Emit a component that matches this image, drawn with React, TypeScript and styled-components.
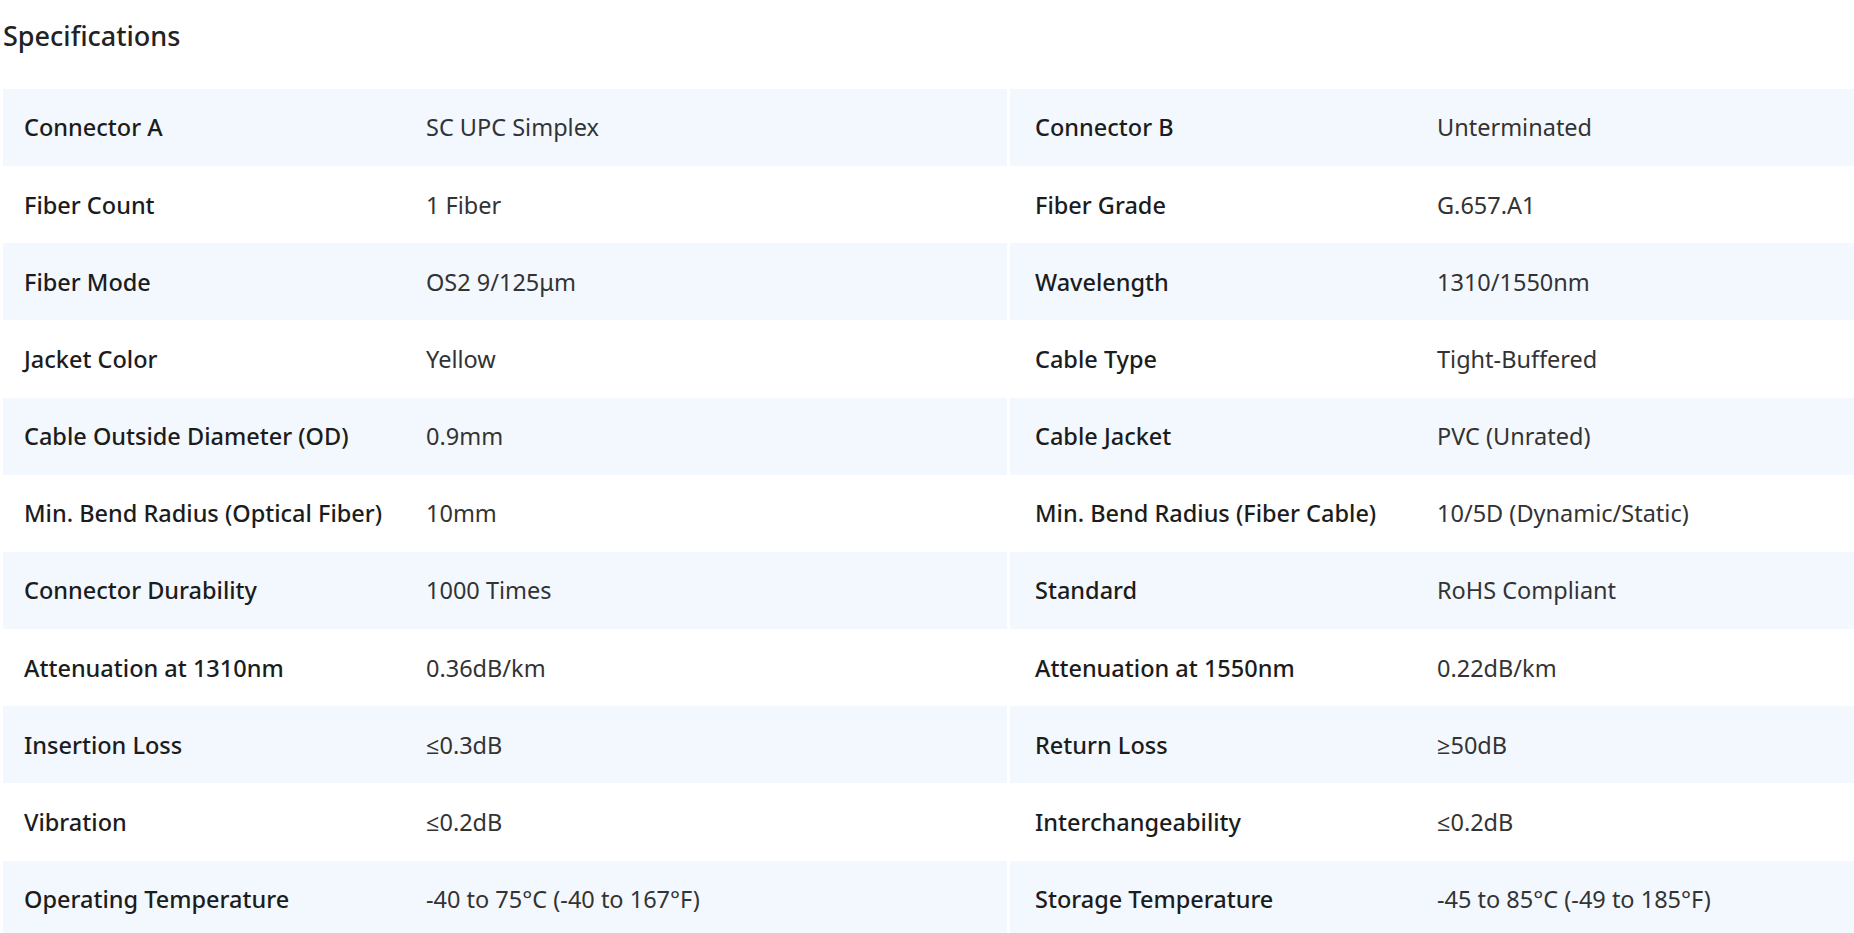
import React from 'react';
import styled, { createGlobalStyle } from 'styled-components';

interface Spec {
  label: string;
  value: string;
}

const specs: [Spec, Spec][] = [
  [
    { label: 'Connector A', value: 'SC UPC Simplex' },
    { label: 'Connector B', value: 'Unterminated' },
  ],
  [
    { label: 'Fiber Count', value: '1 Fiber' },
    { label: 'Fiber Grade', value: 'G.657.A1' },
  ],
  [
    { label: 'Fiber Mode', value: 'OS2 9/125μm' },
    { label: 'Wavelength', value: '1310/1550nm' },
  ],
  [
    { label: 'Jacket Color', value: 'Yellow' },
    { label: 'Cable Type', value: 'Tight-Buffered' },
  ],
  [
    { label: 'Cable Outside Diameter (OD)', value: '0.9mm' },
    { label: 'Cable Jacket', value: 'PVC (Unrated)' },
  ],
  [
    { label: 'Min. Bend Radius (Optical Fiber)', value: '10mm' },
    { label: 'Min. Bend Radius (Fiber Cable)', value: '10/5D (Dynamic/Static)' },
  ],
  [
    { label: 'Connector Durability', value: '1000 Times' },
    { label: 'Standard', value: 'RoHS Compliant' },
  ],
  [
    { label: 'Attenuation at 1310nm', value: '0.36dB/km' },
    { label: 'Attenuation at 1550nm', value: '0.22dB/km' },
  ],
  [
    { label: 'Insertion Loss', value: '≤0.3dB' },
    { label: 'Return Loss', value: '≥50dB' },
  ],
  [
    { label: 'Vibration', value: '≤0.2dB' },
    { label: 'Interchangeability', value: '≤0.2dB' },
  ],
  [
    { label: 'Operating Temperature', value: '-40 to 75°C (-40 to 167°F)' },
    { label: 'Storage Temperature', value: '-45 to 85°C (-49 to 185°F)' },
  ],
];

const GlobalStyle = createGlobalStyle`
  html, body {
    margin: 0;
    padding: 0;
    background: #ffffff;
    overflow: hidden;
  }
  body {
    font-family: 'Noto Sans', 'Open Sans', sans-serif;
  }
`;

const App = () => {
  return (
    <Page>
      <GlobalStyle />
      <Title>Specifications</Title>
      <SpecGrid>
        {specs.map((pair, index) =>
          pair.map((spec, side) => (
            <SpecItem key={`${index}-${side}`} $striped={index % 2 === 0} $inset={side === 0 ? 21 : 25}>
              <Label>{spec.label}</Label>
              <Value>{spec.value}</Value>
            </SpecItem>
          ))
        )}
      </SpecGrid>
    </Page>
  );
};

export default App;

const Page = styled.div`
  padding: 18px 0 0 3px;
  color: #1f1f1f;
`;

const Title = styled.h2`
  margin: 0 0 34px;
  font-size: 27px;
  font-weight: 500;
  line-height: 1.362;
  color: #222222;
`;

const SpecGrid = styled.div`
  display: grid;
  grid-template-columns: 1004px 1fr;
  grid-auto-rows: 77.2px;
  column-gap: 3px;
`;

interface SpecItemProps {
  $striped: boolean;
  $inset: number;
}

const SpecItem = styled.div<SpecItemProps>`
  display: grid;
  grid-template-columns: 402px 1fr;
  align-items: center;
  padding-left: ${props => props.$inset}px;
  background: ${props => (props.$striped ? '#f3f8fe' : '#ffffff')};
  font-size: 23.5px;
  line-height: 1.362;
`;

const Label = styled.span`
  font-weight: 500;
  color: #1c1c1c;
  white-space: nowrap;
`;

const Value = styled.span`
  font-weight: 400;
  color: #333333;
  white-space: nowrap;
`;
